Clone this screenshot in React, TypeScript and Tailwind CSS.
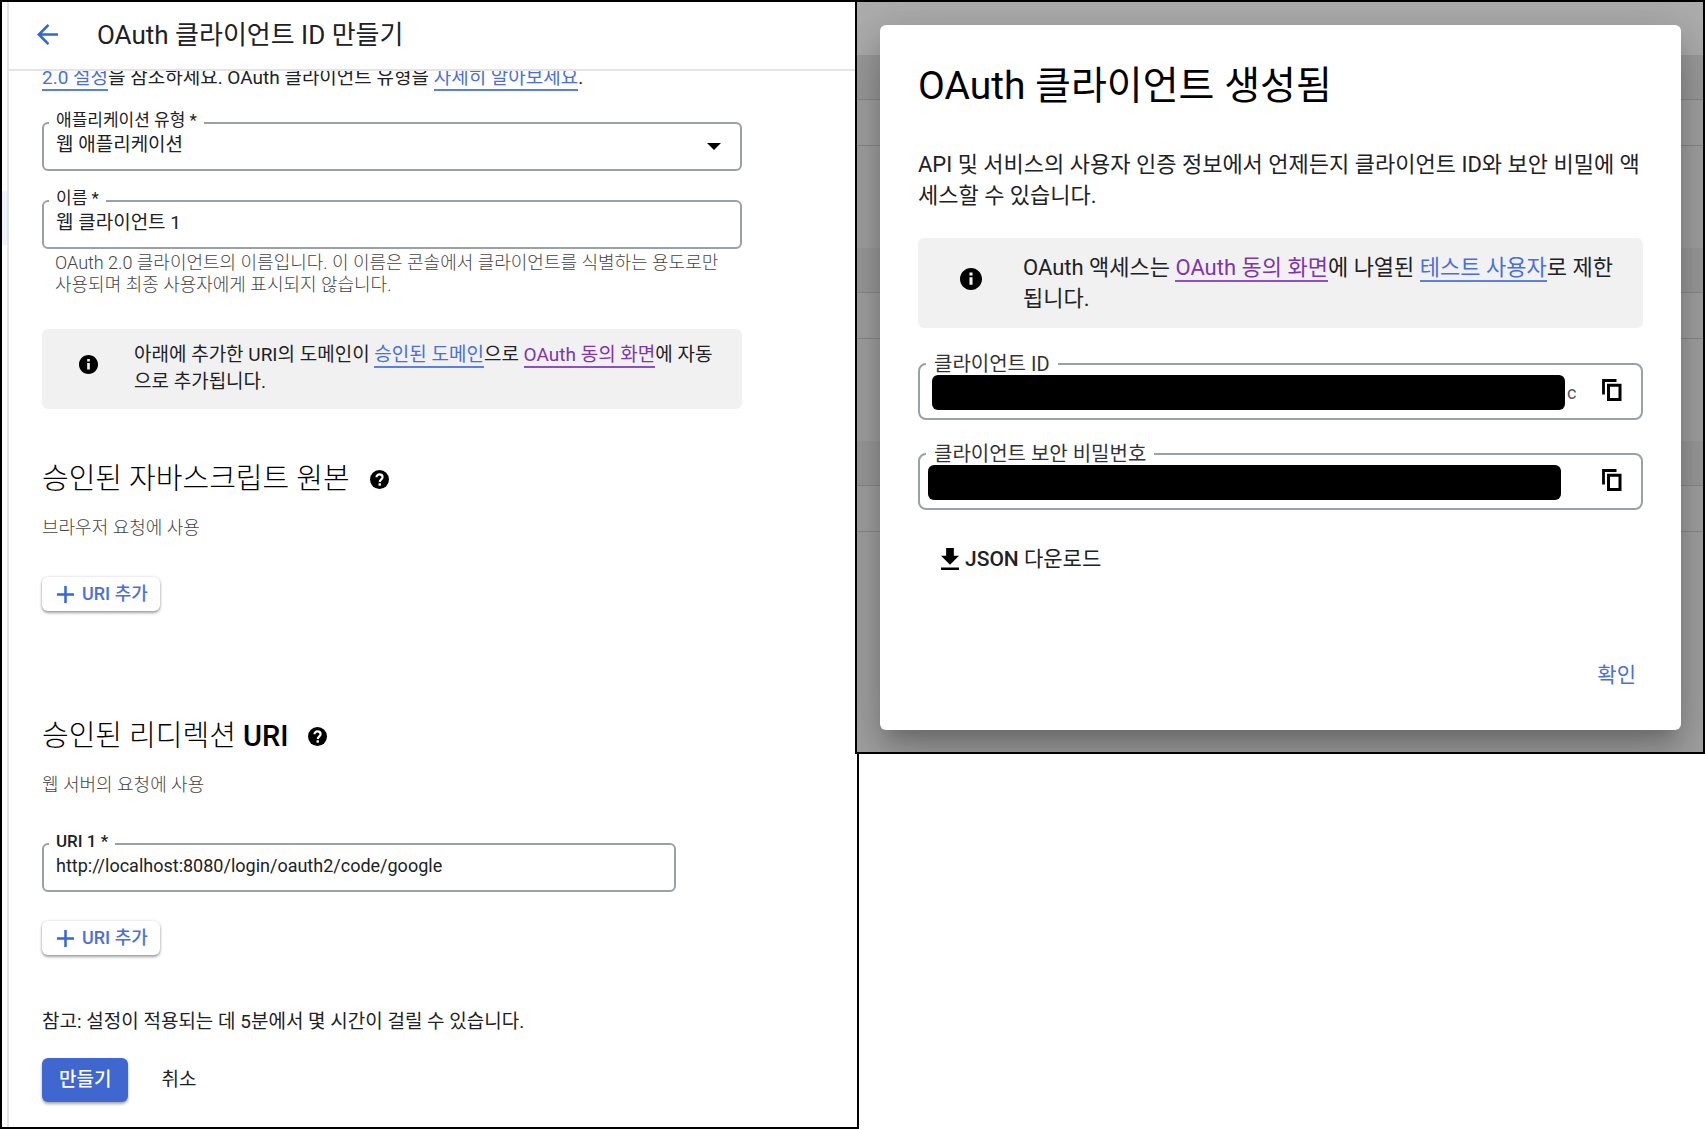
import { useId } from "react";
import type { ReactNode } from "react";

/* ---------- icons ---------- */

function ArrowLeft() {
  return (
    <svg viewBox="4 4 16 16" className="size-[21px]" fill="#3367d6" aria-hidden="true">
      <path d="M20 11H7.83l5.59-5.59L12 4l-8 8 8 8 1.41-1.41L7.83 13H20z" />
    </svg>
  );
}

function InfoIcon({ className }: { className: string }) {
  return (
    <svg viewBox="2 2 20 20" className={className} aria-hidden="true">
      <path d="M12 2C6.48 2 2 6.48 2 12s4.48 10 10 10 10-4.48 10-10S17.52 2 12 2zm1.4 15.200h-2.800v-6.700h2.800zm0-8.300h-2.800V6.200h2.800z" />
    </svg>
  );
}

function HelpIcon() {
  return (
    <svg viewBox="2 2 20 20" className="size-[19px]" aria-hidden="true">
      <circle cx="12" cy="12" r="10" />
      <path d="M8.800 9.700c0-1.900 1.400-3 3.200-3s3.200 1.200 3.200 2.800c0 2.300-2.900 2.400-2.900 5.100" fill="none" stroke="#fff" strokeWidth="2.300" />
      <path d="M11 16h2.500v2.500H11z" fill="#fff" />
    </svg>
  );
}

function PlusIcon() {
  return (
    <svg viewBox="0 0 17 17" className="size-[17px]" stroke="#3367d6" strokeWidth="2.500" aria-hidden="true">
      <path d="M8.500 0v17M0 8.500h17" />
    </svg>
  );
}

function CopyIcon() {
  return (
    <svg viewBox="0 0 20 22" className="h-[22px] w-5" fill="none" stroke="#000" strokeWidth="3" aria-hidden="true">
      <path d="M1.500 15.500V1.500H14.500" strokeWidth="2.800" />
      <path d="M6.500 6.200h11.500v14.300H6.500z" />
    </svg>
  );
}

function DownloadIcon() {
  return (
    <svg viewBox="5 3 14 17" className="h-[22px] w-[18px]" preserveAspectRatio="none" aria-hidden="true">
      <path d="M19 9h-4V3H9v6H5l7 7 7-7zM5 18v2h14v-2H5z" />
    </svg>
  );
}

/* ---------- shared parts ---------- */

function Link({ visited, children }: { visited?: boolean; children: ReactNode }) {
  return (
    <a href="#" className={visited ? "border-b-2 border-[#8e4ec6] text-[#7f35ab]" : "border-b-2 border-[#5c80e0] text-[#4a70d8]"}>
      {children}
    </a>
  );
}

function Field({ label, id, bold, children }: { label: string; id: string; bold?: boolean; children: ReactNode }) {
  return (
    <fieldset className="min-w-0 rounded-md border-2 border-[#9ba0a5] pb-3.5 pl-[5px] text-[19px]">
      <legend className="px-[7px] pb-1.5 text-[17px] leading-[18px]">
        <label htmlFor={id} className={bold ? "font-medium" : ""}>{label}</label>
      </legend>
      <div className="relative px-[7px]">{children}</div>
    </fieldset>
  );
}

function AddUriButton() {
  return (
    <button type="button"
      className="flex h-[34px] items-center gap-2 self-start rounded-md bg-white pr-3 pl-[15px] text-lg font-medium text-[#4a70d8] shadow-[0_2px_3px_rgba(0,0,0,0.35),0_0_3px_rgba(0,0,0,0.15)]">
      <PlusIcon />
      URI 추가
    </button>
  );
}

function SectionTitle({ children, hint }: { children: ReactNode; hint: string }) {
  return (
    <>
      <div className="flex items-center gap-5">
        <h2 className="text-[29px] leading-9 font-light text-black">{children}</h2>
        <HelpIcon />
      </div>
      <p className="mt-[19px] text-lg leading-6 font-light text-[#444]">{hint}</p>
    </>
  );
}

function SecretField({ label, tail, bar }: { label: string; tail?: string; bar: string }) {
  const id = useId();
  return (
    <fieldset className="min-w-0 rounded-lg border-2 border-[#9ba0a5] pt-px pb-2 pl-1.5">
      <legend className="px-2 text-xl leading-5 text-[#333]">
        <label htmlFor={id}>{label}</label>
      </legend>
      <div className="flex items-center">
        <div className={bar}>
          <input id={id} readOnly className="block h-[35px] w-full rounded-md bg-black" />
        </div>
        <span className="w-[37px] pl-0.5 text-lg text-[#555]">{tail}</span>
        <button type="button" aria-label="복사" className="mr-[19px] mb-1.5">
          <CopyIcon />
        </button>
      </div>
    </fieldset>
  );
}

/* ---------- left: create client form ---------- */

function CreateClient() {
  return (
    <section className="flex border-2 border-black bg-white">
      <div className="w-[7px] shrink-0 border-r-2 border-[#e4e4e6] pt-[189px]">
        <div className="h-[54px] bg-[#eef2fd]" />
      </div>
      <div className="min-w-0 flex-1">
        <header className="relative flex h-[69px] items-center gap-[39px] border-b-2 border-[#e4e4e6] bg-white pb-0.5 pl-7">
          <button type="button" aria-label="뒤로">
            <ArrowLeft />
          </button>
          <h1 className="text-[26px] leading-9">OAuth 클라이언트 ID 만들기</h1>
        </header>

        <form className="flex flex-col pr-[115px] pb-[25px] pl-[33px] text-[19px]">
          <p className="-mt-[7px] leading-7">
            <Link>2.0 설정</Link>을 참조하세요. OAuth 클라이언트 유형을 <Link>자세히 알아보세요</Link>.
          </p>

          <div className="mt-[19px] flex flex-col gap-[18px]">
            <Field label="애플리케이션 유형 *" id="app-type">
              <select id="app-type" className="block h-5 w-full appearance-none leading-5">
                <option>웹 애플리케이션</option>
              </select>
              <svg viewBox="0 0 14 7" className="pointer-events-none absolute top-2 right-[19px] h-[7px] w-3.5" aria-hidden="true">
                <path d="M0 0h14L7 7z" />
              </svg>
            </Field>
            <Field label="이름 *" id="client-name">
              <input id="client-name" defaultValue="웹 클라이언트 1" className="block h-5 w-full leading-5" />
            </Field>
          </div>
          <p className="mt-[3px] pl-[13px] text-lg leading-[22px] font-light text-[#444]">
            OAuth 2.0 클라이언트의 이름입니다. 이 이름은 콘솔에서 클라이언트를 식별하는 용도로만<br />
            사용되며 최종 사용자에게 표시되지 않습니다.
          </p>

          <div className="mt-[33px] flex rounded-md bg-[#f1f1f1] pt-3 pr-5 pb-3.5 pl-[37px]">
            <InfoIcon className="mt-3.5 mr-9 size-[19px] shrink-0" />
            <p className="leading-[27px]">
              아래에 추가한 URI의 도메인이 <Link>승인된 도메인</Link>으로 <Link visited>OAuth 동의 화면</Link>에 자동으로 추가됩니다.
            </p>
          </div>

          <div className="mt-[52px] flex flex-col">
            <SectionTitle hint="브라우저 요청에 사용">승인된 자바스크립트 원본</SectionTitle>
            <div className="mt-[37px] flex">
              <AddUriButton />
            </div>
          </div>

          <div className="mt-[107px] flex flex-col">
            <SectionTitle hint="웹 서버의 요청에 사용">
              승인된 리디렉션 <span className="font-medium">URI</span>
            </SectionTitle>
            <div className="mt-[35px] mr-[66px]">
              <Field label="URI 1 *" id="uri-1" bold>
                <input id="uri-1" defaultValue="http://localhost:8080/login/oauth2/code/google" className="block h-5 w-full text-lg leading-5" />
              </Field>
            </div>
            <div className="mt-[29px] flex">
              <AddUriButton />
            </div>
          </div>

          <p className="mt-[53px] leading-7">참고: 설정이 적용되는 데 5분에서 몇 시간이 걸릴 수 있습니다.</p>

          <div className="mt-[22px] flex items-center gap-[33px]">
            <button type="button" className="h-11 rounded-md bg-[#4066d0] px-[17px] font-medium text-white shadow-[0_2px_3px_rgba(0,0,0,0.35)]">
              만들기
            </button>
            <button type="button">취소</button>
          </div>
        </form>
      </div>
    </section>
  );
}

/* ---------- right: client created dialog ---------- */

// dimmed list rows that show on both sides of the dialog
function Backdrop() {
  return (
    <div className="absolute inset-0 flex flex-col overflow-hidden bg-[#a3a3a3]" aria-hidden="true">
      <div className="h-[53px] bg-[#adadad]" />
      {[0, 1, 2].map((i) => (
        <div key={i} className="h-[193px]">
          <div className="h-[45px] border-b border-[#8a8a8a] bg-[#9c9c9c]" />
          <div className="h-[46px] border-b border-[#8a8a8a]" />
        </div>
      ))}
    </div>
  );
}

function CreatedDialog() {
  return (
    <section className="relative -ml-1 overflow-hidden border-2 border-black pt-[23px] pr-[22px] pb-[22px] pl-[23px]">
      <Backdrop />
      <div role="dialog" aria-labelledby="dialog-title"
        className="relative flex flex-col rounded-md bg-white px-[38px] pt-[37px] pb-10 shadow-[0_13px_18px_-8px_rgba(0,0,0,0.2),0_28px_44px_4px_rgba(0,0,0,0.14),0_10px_52px_10px_rgba(0,0,0,0.12)]">
        <h2 id="dialog-title" className="text-[39px] leading-[48px] text-black">OAuth 클라이언트 생성됨</h2>
        <p className="mt-[39px] text-[22px] leading-[31px]">
          API 및 서비스의 사용자 인증 정보에서 언제든지 클라이언트 ID와 보안 비밀에 액세스할 수 있습니다.
        </p>

        <div className="mt-[27px] flex rounded-md bg-[#f1f1f1] py-3.5 pr-6 pl-[42px]">
          <InfoIcon className="mt-4 mr-[41px] size-[22px] shrink-0" />
          <p className="text-[22px] leading-[31px]">
            OAuth 액세스는 <Link visited>OAuth 동의 화면</Link>에 나열된 <Link>테스트 사용자</Link>로 제한됩니다.
          </p>
        </div>

        <div className="mt-[26px] flex flex-col gap-6">
          <SecretField label="클라이언트 ID" tail="c" bar="min-w-0 flex-1 pl-1.5" />
          <SecretField label="클라이언트 보안 비밀번호" bar="min-w-0 flex-1 pr-1 pl-0.5" />
        </div>

        <button type="button" className="mt-[34px] ml-[23px] flex items-center gap-1.5 self-start text-[21px] leading-[30px]">
          <DownloadIcon />
          <span><span className="font-medium">JSON</span> 다운로드</span>
        </button>

        <button type="button" className="mt-[86px] mr-[7px] self-end text-[21px] leading-[30px] text-[#4a70d8]">확인</button>
      </div>
    </section>
  );
}

export default function App() {
  return (
    <main className="grid min-h-screen grid-cols-[859fr_846fr] items-start bg-white font-['Roboto','Noto_Sans_CJK_KR',sans-serif] text-[#202124]">
      <CreateClient />
      <CreatedDialog />
    </main>
  );
}
